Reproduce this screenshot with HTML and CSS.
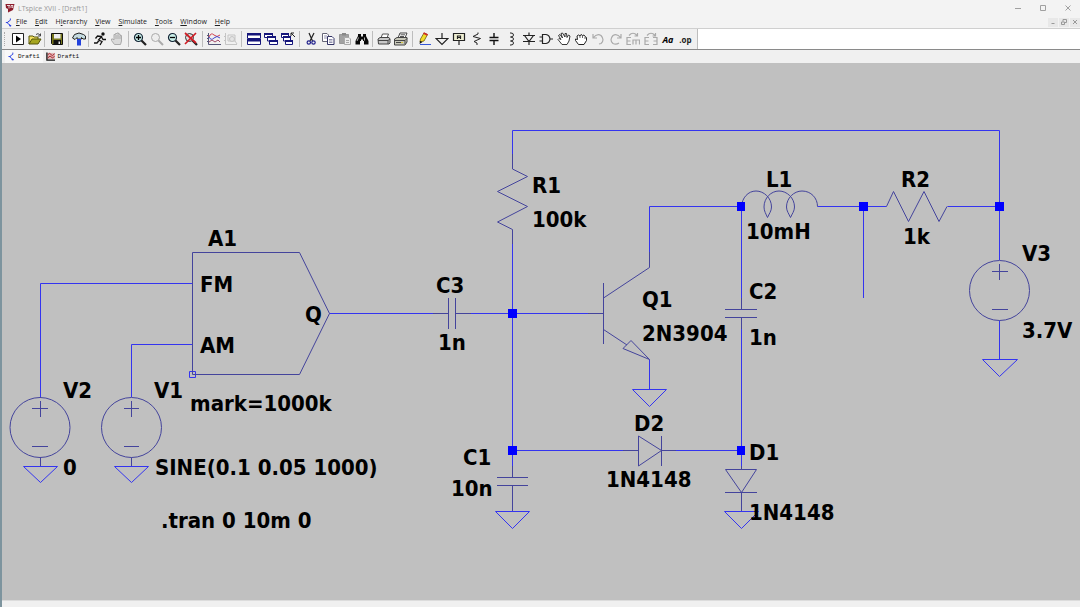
FILE: index.html
```html
<!DOCTYPE html>
<html lang="en">
<head>
<meta charset="utf-8">
<title>LTspice XVII - [Draft1]</title>
<link rel="stylesheet" href="styles.css">
</head>
<body>
<div class="window">
  <header class="titlebar">
    <svg class="app-icon" viewBox="0 0 10 10" aria-hidden="true"><path d="M.5 1H9.500L8 7L3 9.500V6L1 5Z" fill="#8c1c2c"/><path d="M2 2.500H5M4 2.500V5.500M6 5V2.500H8L7.500 5" fill="none" stroke="#fff" stroke-width=".8"/></svg>
    <h1 class="title">LTspice XVII - [Draft1]</h1>
    <div class="window-controls">
      <button class="win-btn" aria-label="Minimize"><svg viewBox="0 0 8 8"><path d="M1 4.500H7"/></svg></button>
      <button class="win-btn" aria-label="Maximize"><svg viewBox="0 0 8 8"><path d="M1.500 1.500H6.500V6.500H1.500Z"/></svg></button>
      <button class="win-btn" aria-label="Close"><svg viewBox="0 0 8 8"><path d="M1.500 1.500L6.500 6.500M6.500 1.500L1.500 6.500"/></svg></button>
    </div>
  </header>

  <nav class="menubar">
    <svg class="doc-icon" viewBox="0 0 8 10" aria-hidden="true"><path d="M5.500 .5V2.500L2.500 4.500V6L5.500 8V9.500M.5 5H2.500M4 8.500H6.500"/></svg>
    <button class="menu"><u>F</u>ile</button>
    <button class="menu"><u>E</u>dit</button>
    <button class="menu">H<u>i</u>erarchy</button>
    <button class="menu"><u>V</u>iew</button>
    <button class="menu"><u>S</u>imulate</button>
    <button class="menu"><u>T</u>ools</button>
    <button class="menu"><u>W</u>indow</button>
    <button class="menu"><u>H</u>elp</button>
    <div class="mdi-controls">
      <button class="mdi-btn" aria-label="Minimize document"><svg viewBox="0 0 8 8"><path d="M2.500 5.500H5.500"/></svg></button>
      <button class="mdi-btn" aria-label="Restore document"><svg viewBox="0 0 8 8"><path d="M1.500 4H4.500V6.500H1.500ZM3 3.500V1.500H6.500V4.500H5"/></svg></button>
      <button class="mdi-btn" aria-label="Close document"><svg viewBox="0 0 8 8"><path d="M2 2L6 6M6 2L2 6"/></svg></button>
    </div>
  </nav>

  <div class="toolrow">
  <div class="toolbar" role="toolbar" aria-label="Schematic tools">
    <span class="grip"></span>
    <div class="group g-file">
      <button class="tool" aria-label="New schematic"><svg viewBox="0 0 14 14"><path d="M1.500 1.500H12.500V12.500H1.500Z" fill="#fff" stroke="#222"/><path d="M5 3.500L10 7L5 10.500Z" fill="#000"/></svg></button>
      <button class="tool" aria-label="Open"><svg viewBox="0 0 14 14"><path d="M1 12V4H5L6 5H10V7" fill="#f2e060" stroke="#55550a"/><path d="M1 12L4 7H13L10 12Z" fill="#a5a520" stroke="#55550a"/><path d="M8 2.500Q10 .5 12 3M12.500 1.500V4H10" fill="none" stroke="#444"/></svg></button>
    </div>
    <div class="group g-save">
      <button class="tool" aria-label="Save"><svg viewBox="0 0 14 14"><path d="M1.500 1.500H12.500V12.500H2.500L1.500 11.500Z" fill="#77771c" stroke="#111"/><path d="M4 2H10.500V6.500H4Z" fill="#eee"/><path d="M3.500 8H11V12.500H3.500Z" fill="#111"/><path d="M8.500 9.500H10V12H8.500Z" fill="#eee"/></svg></button>
    </div>
    <div class="group g-panel">
      <button class="tool" aria-label="Control panel"><svg viewBox="0 0 14 14"><path d="M.5 6L2.500 2.500Q7 -.5 11.500 2.500L13.500 4V7H11L9.500 5.500V7H5V5.500L3 7.500Z" fill="#c5dbe0" stroke="#222"/><path d="M5 7H9V13.500H5Z" fill="#2342dd"/></svg></button>
    </div>
    <div class="group g-run">
      <button class="tool" aria-label="Run"><svg viewBox="0 0 14 14"><circle cx="10" cy="2" r="1.700" fill="#111"/><path d="M9 4L5.500 8L9 9.500L7 13M6 8.500L4 11H1M8 4.500L4.500 4L2.500 6.500M8.500 5L10 7.500H13" fill="none" stroke="#111" stroke-width="1.300"/></svg></button>
      <button class="tool" aria-label="Halt" disabled><svg viewBox="0 0 14 14"><path d="M4.500 12.500L1.500 8.500V7H3L4 8V2.500H5.500V1.500H7V1H8.500V2H10V3.500H11.500V9L10.500 12.500Z" fill="#dadada" stroke="#aaa"/><path d="M6 7V3M8 7V2.500M10 7V4" stroke="#999" stroke-width=".7"/></svg></button>
    </div>
    <div class="group g-zoom">
      <button class="tool" aria-label="Zoom in"><svg viewBox="0 0 14 14"><circle cx="5.500" cy="5.500" r="4" fill="#c9eee8" stroke="#123" stroke-width="1.200"/><path d="M8.500 8.500L13 13" stroke="#222" stroke-width="2.200"/><path d="M3 5.500H8M5.500 3V8" stroke="#000" stroke-width="1.300"/></svg></button>
      <button class="tool" aria-label="Zoom back" disabled><svg viewBox="0 0 14 14"><circle cx="5.500" cy="5.500" r="4" fill="#eee" stroke="#aaa"/><path d="M8.500 8.500L13 13" stroke="#aaa" stroke-width="2"/></svg></button>
      <button class="tool" aria-label="Zoom out"><svg viewBox="0 0 14 14"><circle cx="5.500" cy="5.500" r="4" fill="#c9eee8" stroke="#123" stroke-width="1.200"/><path d="M8.500 8.500L13 13" stroke="#222" stroke-width="2.200"/><path d="M3 5.500H8" stroke="#000" stroke-width="1.300"/></svg></button>
      <button class="tool" aria-label="Zoom full extents"><svg viewBox="0 0 14 14"><circle cx="5.500" cy="5.500" r="4" fill="#ddd" stroke="#333"/><path d="M8.500 8.500L13 13" stroke="#222" stroke-width="2.200"/><path d="M1 1L12 11M12 1L1 12" stroke="#d01c24" stroke-width="1.700"/></svg></button>
    </div>
    <div class="group g-plot">
      <button class="tool" aria-label="Autorange"><svg viewBox="0 0 14 14"><path d="M1.500 1V12.500H14M0 3.500H2M0 6.500H2M0 9.500H2" fill="none" stroke="#557"/><path d="M2 5Q4 0 7 3T13 3" fill="none" stroke="#d04050"/><path d="M2 5Q4 9 7 6T13 6" fill="none" stroke="#4048d0"/><path d="M2 10L5 8L8 10L11 8L13 10" fill="none" stroke="#a04868"/></svg></button>
      <button class="tool" aria-label="Plot settings" disabled><svg viewBox="0 0 14 14"><path d="M1.500 1V12.500H13M4 3H11V9H4ZM0 4.500H2M0 8.500H2M11 9L13 12" fill="none" stroke="#c4c4c4"/><circle cx="8" cy="7" r="2.500" fill="#e4e4e4" stroke="#c4c4c4"/></svg></button>
    </div>
    <div class="group g-windows">
      <button class="tool" aria-label="Tile windows"><svg viewBox="0 0 14 14"><path d="M.5 1.500H13.500V6.500H.5ZM.5 7.500H13.500V12.500H.5Z" fill="#fff" stroke="#15157a"/><path d="M0 1H14V3.500H0ZM0 7H14V9.500H0Z" fill="#15157a"/></svg></button>
      <button class="tool" aria-label="Cascade windows"><svg viewBox="0 0 14 14"><g fill="#fff" stroke="#15157a"><path d="M.5 1.500H8.500V5.500H.5ZM3.500 4.500H11.500V9H3.500ZM5.500 8.500H13.500V12.500H5.500Z"/></g><path d="M0 1H9V3H0ZM3 4H12V6H3ZM5 8H14V10H5Z" fill="#15157a"/></svg></button>
      <button class="tool" aria-label="Close all windows"><svg viewBox="0 0 14 14"><g fill="#fff" stroke="#15157a"><path d="M.5 1.500H7.500V5.500H.5ZM2.500 4.500H9.500V9H2.500ZM4.500 8.500H11.500V12.500H4.500Z"/></g><path d="M0 1H8V3H0ZM2 4H10V6H2ZM4 8H12V10H4Z" fill="#15157a"/><path d="M10 1H13M10 1V4M10 1L14 5" stroke="#222" fill="none"/></svg></button>
    </div>
    <div class="group g-edit">
      <button class="tool" aria-label="Cut"><svg viewBox="0 0 14 14"><path d="M5 1L8.500 9M10 1L6 9" stroke="#222" stroke-width="1.200"/><circle cx="4.800" cy="10.500" r="1.700" fill="none" stroke="#20208c" stroke-width="1.200"/><circle cx="9.500" cy="10.500" r="1.700" fill="none" stroke="#20208c" stroke-width="1.200"/></svg></button>
      <button class="tool" aria-label="Copy"><svg viewBox="0 0 14 14"><path d="M1.500 1.500H6L7.500 3V9.500H1.500Z" fill="#fff" stroke="#667"/><path d="M6.500 4.500H11L13 6.500V12.500H6.500Z" fill="#fff" stroke="#336"/><path d="M3 4H6M3 6H6M8 7.500H11.500M8 9H11.500M8 10.500H11.500" stroke="#779" stroke-width=".8"/></svg></button>
      <button class="tool" aria-label="Paste" disabled><svg viewBox="0 0 14 14"><path d="M1.500 2.500H10.500V11.500H1.500Z" fill="#a2a2a2" stroke="#999"/><path d="M4 1H8V3.500H4Z" fill="#888"/><path d="M6.500 5.500H11L12.500 7V12.500H6.500Z" fill="#eee" stroke="#aaa"/><path d="M8 8.500H11M8 10.500H11" stroke="#aaa"/></svg></button>
      <button class="tool" aria-label="Find"><svg viewBox="0 0 14 14"><path d="M3 2H6V4L7 5L8 4V2H11V4L13.500 9V12.500H9V9H8V7.500H6V9H5V12.500H.5V9L3 4Z" fill="#080808"/><path d="M3.500 5.500L2 9M9.500 5.500V8.500" stroke="#ddd" stroke-width=".8"/></svg></button>
    </div>
    <div class="group g-print">
      <button class="tool" aria-label="Print preview"><svg viewBox="0 0 14 14"><path d="M4 6L5.500 2H11.500L10 6" fill="#fff" stroke="#555"/><path d="M1 7L3 5.500H12L13 7V11L12 12H1.500Z" fill="#c8c8c8" stroke="#444"/><path d="M1 8.500H11L13 7M11 8.500V12" fill="none" stroke="#444"/></svg></button>
      <button class="tool" aria-label="Print"><svg viewBox="0 0 14 14"><path d="M4 6L6 1H13L11 6" fill="#fff" stroke="#444"/><path d="M6.500 2.800H11M6 4.500H10" stroke="#555"/><path d="M.5 7L3 5.500H13V10L11 13H.5Z" fill="#c8c8ba" stroke="#444"/><path d="M.5 8.500H11L13 6.500M11 8.500V12M2 10.500H9" fill="none" stroke="#444"/><path d="M7 10H9V11H7Z" fill="#d5c640"/></svg></button>
    </div>
    <div class="group g-draw">
      <button class="tool" aria-label="Wire"><svg viewBox="0 0 14 14"><path d="M2 10L2.500 7L6 1L9.500 2.500L6 9Z" fill="#f2dc28" stroke="#6b5a10" stroke-width=".8"/><path d="M5.500 1L9.500 3" stroke="#d02828" stroke-width="1.800"/><path d="M1.500 12L2 9L4.500 10Z" fill="#111"/><path d="M2 12.500H13" stroke="#3457d8"/></svg></button>
      <button class="tool" aria-label="Ground"><svg viewBox="0 0 14 14"><path d="M7 1V6.500M1 6.500H13L7 12.500Z" fill="none" stroke="#222" stroke-width="1.200"/></svg></button>
      <button class="tool" aria-label="Label net"><svg viewBox="0 0 14 14"><path d="M1.500 1.500H12.500V8.500H1.500Z" fill="#eeeed2" stroke="#222" stroke-width="1.200"/><path d="M7 8.500V13M5.500 7V4H8.500V7M5.500 5.500H8.500" fill="none" stroke="#222" stroke-width="1.200"/></svg></button>
      <button class="tool" aria-label="Resistor"><svg viewBox="0 0 14 14"><path d="M8 .5V2L3 4.500L10.500 6.500L4 9.500L7 11V13" fill="none" stroke="#222"/></svg></button>
      <button class="tool" aria-label="Capacitor"><svg viewBox="0 0 14 14"><path d="M7 1V5.500M7 8.500V13M2.500 5.500H11.500M2.500 8.500H11.500" stroke="#111" stroke-width="1.400"/></svg></button>
      <button class="tool" aria-label="Inductor"><svg viewBox="0 0 14 14"><path d="M5 1H6Q8.500 1 8.500 3T5.500 5Q8.500 5 8.500 7T5.500 9Q8.500 9 8.500 11T6 13H5" fill="none" stroke="#222"/></svg></button>
      <button class="tool" aria-label="Diode"><svg viewBox="0 0 14 14"><path d="M7 .5V4M7 9.500V13M1 3.500H13M2.500 3.500L7 9.500L11.500 3.500M1 9.500H13" fill="none" stroke="#222" stroke-width="1.200"/></svg></button>
      <button class="tool" aria-label="Component"><svg viewBox="0 0 14 14"><path d="M3.500 2.500H7Q10.500 3 11 7Q10.500 11 7 11.500H3.500ZM.5 5H3.500M.5 9H3.500M11 7H14" fill="none" stroke="#222" stroke-width="1.200"/></svg></button>
      <button class="tool" aria-label="Move"><svg viewBox="0 0 14 14"><path d="M5 12.500L1 7.500L2 6.500L4 7.500L1.500 3.500L3 2.500L5.500 6L4 1.500L5.500 1L8 5V1.500H9.500L10 5.500L11.500 3L13 4L12 9L10 12.500Z" fill="#fff" stroke="#222" stroke-width=".9"/></svg></button>
      <button class="tool" aria-label="Drag"><svg viewBox="0 0 14 14"><path d="M4.500 12.500L1.500 8.500V7L3.500 7.500L3 4L4.500 3L6 4L7 2.500L8.500 3.500L10 3L11 4.500L12.500 5.500V8.500L10 12.500Z" fill="#fff" stroke="#222"/><path d="M6 4V6M8.500 4V6M11 5V7" stroke="#222" stroke-width=".7"/></svg></button>
      <button class="tool" aria-label="Undo" disabled><svg viewBox="0 0 14 14"><path d="M2 2V6H6M2 6Q6 1 10 3.500Q14 8 10 11.500L8 12" fill="none" stroke="#aaa" stroke-width="1.200"/></svg></button>
      <button class="tool" aria-label="Redo" disabled><svg viewBox="0 0 14 14"><path d="M12 2V6H8M12 6Q8 1 4 3.500Q0 8 4 11.500Q7 13 10 11" fill="none" stroke="#aaa" stroke-width="1.200"/></svg></button>
      <button class="tool" aria-label="Rotate" disabled><svg viewBox="0 0 14 14"><path d="M5 5.500H1V12.500H5M1 9H4.500M7 12.500V8H13.500V12.500M10 8V12.500M3 3.500Q7 -1 11 3.500M11.500 1V4H8.500" fill="none" stroke="#aaa" stroke-width="1.200"/></svg></button>
      <button class="tool" aria-label="Mirror" disabled><svg viewBox="0 0 14 14"><path d="M5 5.500H1V12.500H5M1 9H4.500M9 5.500H13V12.500H9M13 9H9.500M3 3.500Q7 -1 11 3.500M11.500 1V4H8.500" fill="none" stroke="#aaa" stroke-width="1.200"/></svg></button>
      <button class="tool tool-text" aria-label="Text">Aa</button>
      <button class="tool tool-op" aria-label="SPICE directive">.op</button>
    </div>
  </div>
  </div>

  <div class="tabs" role="tablist">
    <button class="tab active" role="tab" aria-selected="true">
      <svg class="tab-icon" viewBox="0 0 8 10"><path class="doc-mark" d="M5.500 .5V2.500L2.500 4.500V6L5.500 8V9.500M.5 5H2.500M4 8.500H6.500"/></svg>
      <span>Draft1</span>
    </button>
    <button class="tab" role="tab" aria-selected="false">
      <svg class="tab-icon wide" viewBox="0 0 10 10"><path d="M1 1H10V8H1Z" fill="#dcb4b4"/><path d="M1 .5V9H10" fill="none" stroke="#111" stroke-width="1.400"/><path d="M2 3L4 1.500L7 4L9.500 2M2 6.500L4.500 4.500L7 6.500L9.500 5" fill="none" stroke="#a81822"/></svg>
      <span>Draft1</span>
    </button>
  </div>

  <main class="canvas">
    <svg class="schematic" viewBox="2 63 1078 537" preserveAspectRatio="xMinYMin meet" role="img" aria-label="FM transmitter schematic">
      <g class="wire">
        <path d="M192.500 283.500H40.500V397M192.500 344.500H131.500V397"/>
        <path d="M329.500 313.500H433M471 313.500H588"/>
        <path d="M512.500 154V130.500H999.500V260M512.500 244V466"/>
        <path d="M649.500 252V206.500H741.500V298M741.500 329V466M817.500 206.500H886.500M863.500 206.500V298M947.500 206.500H999.500"/>
        <path d="M512.500 450.500H623M676 450.500H741.500M649.500 359.500V389.500M999.500 320.500V359.500"/>
        <path d="M23.500 466.500H57.500L40.500 482.500ZM114.500 466.500H148.500L131.500 482.500ZM495.500 511.500H529.500L512.500 528.500ZM632.500 389.500H666.500L649.500 406.500ZM724.500 511.500H758.500L741.500 528.500ZM982.500 359.500H1017.500L999.500 376.500Z"/>
        <path d="M189.500 371.500H195.500V377.500H189.500Z"/>
      </g>
      <g class="symbol">
        <path d="M192.500 252.500H299.500L329.500 313.500L299.500 374.500H192.500Z"/>
        <circle cx="40" cy="427.500" r="30"/><path d="M32 408.500H48M40.500 401V417M32 446.500H48M40.500 457.500V466"/>
        <circle cx="131.500" cy="427.500" r="30"/><path d="M124 408.500H139M131.500 401V417M124 446.500H139M131.500 457.500V466"/>
        <circle cx="999.500" cy="290.500" r="30"/><path d="M992 271.500H1008M999.500 264V280M992 309.500H1008"/>
        <path d="M433 313.500H448M448.500 298V329M455.500 298V329M455.500 313.500H471"/>
        <path d="M512.500 154V169L527.500 176.500L497.500 191.500L527.500 206.500L497.500 222L512.500 229.500V244"/>
        <path d="M512.500 466V477.500M497 477.500H528M497 485.500H528M512.500 485.500V511"/>
        <path d="M588 313.500H603.500M603.500 283V344M603.500 298L649.500 267.500V252M603.500 329.500L627 345M623 348.500L631 340.500L649.500 359.500Z"/>
        <path d="M741.500 206.500C742 198 748 191 756 191C764 191 771.500 198 771.500 207C771.500 211 769 214 767.500 217.500C766 214 764 211 764 207C764 198 771 191 779 191C787 191 794.500 198 794.500 207C794.500 211 792 214 790.500 217.500C789 214 786.500 211 786.500 207C786.500 198 794 191 802 191C811 191 817.500 198 817.500 206.500"/>
        <path d="M886.500 206.500L893.500 191.500L908.500 221.500L924 191.500L939 221.500L947 206.500"/>
        <path d="M741.500 298V309.500M725 309.500H757M725 317.500H757M741.500 317.500V329"/>
        <path d="M623 450.500H638.500M638.500 436V466L661.500 450.500ZM661.500 436V466M661.500 450.500H676"/>
        <path d="M741.500 466V469.500M725.500 469.500H756.500L741.500 492.500ZM725 492.500H757M741.500 492.500V511"/>
      </g>
      <g class="node">
        <rect x="508" y="309" width="9" height="9"/><rect x="508" y="446" width="9" height="9"/>
        <rect x="737" y="202" width="8" height="9"/><rect x="737" y="446" width="8" height="9"/>
        <rect x="859" y="202" width="9" height="9"/><rect x="995" y="202" width="9" height="9"/>
      </g>
      <g class="label">
        <text x="208" y="246">A1</text><text x="200" y="292">FM</text><text x="200" y="353">AM</text><text x="305" y="322">Q</text>
        <text x="63" y="398">V2</text><text x="63" y="475">0</text><text x="154" y="398">V1</text>
        <text x="190" y="411">mark=1000k</text><text x="155" y="475">SINE(0.1 0.05 1000)</text><text x="161" y="528">.tran 0 10m 0</text>
        <text x="532" y="193">R1</text><text x="532" y="227">100k</text><text x="436" y="293">C3</text><text x="438" y="350">1n</text>
        <text x="642" y="307">Q1</text><text x="642" y="341">2N3904</text>
        <text x="766" y="187">L1</text><text x="746" y="239">10mH</text><text x="901" y="187">R2</text><text x="903" y="244">1k</text>
        <text x="1022" y="261">V3</text><text x="1022" y="338">3.7V</text><text x="749" y="299">C2</text><text x="749" y="345">1n</text>
        <text x="463" y="465">C1</text><text x="451" y="496">10n</text><text x="634" y="431">D2</text><text x="606" y="487">1N4148</text>
        <text x="749" y="460">D1</text><text x="749" y="520">1N4148</text>
      </g>
    </svg>
  </main>
  <footer class="statusbar"></footer>
</div>
</body>
</html>
```

FILE: styles.css
```css
* { box-sizing: border-box; }

body {
  margin: 0;
  font-family: "Open Sans", "Noto Sans", sans-serif;
  font-size: 7px;
  color: #222;
}

button {
  margin: 0;
  padding: 0;
  border: 0;
  background: none;
  font: inherit;
  color: inherit;
}

.window {
  display: flex;
  flex-direction: column;
  height: 100vh;
  border-left: 2px solid #7d949e;
  background: #f0f0f0;
}

.titlebar {
  display: flex;
  align-items: center;
  flex: 0 0 16px;
  padding-left: 3px;
  background: #f3f3f3;
}

.app-icon { width: 10px; height: 10px; }

.title {
  margin: 0 0 0 3px;
  font-size: 7px;
  font-weight: 400;
  color: #999;
}

.window-controls, .mdi-controls { display: flex; margin-left: auto; }
.window-controls { gap: 12px; padding-right: 6px; }
.win-btn { display: grid; place-items: center; width: 13px; height: 14px; }
.win-btn svg { width: 8px; height: 8px; fill: none; stroke: #a0a0a0; }

.menubar {
  display: flex;
  align-items: center;
  flex: 0 0 13px;
  gap: 8px;
  padding-left: 3px;
  background: #f3f3f3;
  border-bottom: 1px solid #cfcfcf;
}

.doc-icon { width: 8px; height: 9px; margin-right: -5px; fill: none; stroke: #2038e0; }
.menu { line-height: 12px; white-space: nowrap; }
.menu u { text-underline-offset: 1px; }
.mdi-controls { gap: 1px; }
.mdi-btn { display: grid; place-items: center; width: 10px; height: 9px; background: #e8e8e8; }
.mdi-btn svg { width: 8px; height: 8px; fill: none; stroke: #999; }

.toolrow {
  flex: 0 0 21px;
  background: #fff;
  border-bottom: 1px solid #8a8a8a;
}

.toolbar {
  display: flex;
  width: max-content;
  height: 20px;
  background: #f0f0f0;
  border-right: 1px solid #bdbdbd;
}

.grip { width: 2px; margin: 3px 2px; border-left: 1px dotted #aaa; }
.group {
  display: flex;
  align-items: center;
  justify-content: center;
  margin: 2px 0;
  border-right: 1px solid #bdbdbd;
}
.g-file { width: 37px; }
.g-save { width: 24px; }
.g-panel { width: 20px; }
.g-run { width: 40px; }
.g-zoom { width: 74px; }
.g-plot { width: 39px; }
.g-windows { width: 58px; }
.g-edit { width: 73px; }
.g-print { width: 40px; }
.g-draw { width: 284px; padding: 0 3px; justify-content: space-around; border-right: 0; }

.tool { display: grid; place-items: center; width: 17px; height: 16px; }
.tool svg { width: 14px; height: 14px; }
.tool-text { font: italic 700 9px "Open Sans", sans-serif; color: #000; }
.tool-op { font: 700 8px "Open Sans", sans-serif; color: #222; }

.tabs { display: flex; flex: 0 0 13px; padding-left: 3px; background: #f0f0f0; }
.tab {
  display: flex;
  align-items: center;
  gap: 3px;
  padding: 0 3px;
  font: 6px "Liberation Mono", monospace;
  color: #111;
}
.tab.active { background: #f8f8f8; }
.tab-icon { width: 7px; height: 9px; }
.tab-icon.wide { width: 9px; }
.doc-mark { fill: none; stroke: #2038e0; }

.canvas { flex: 1 1 0; min-height: 0; background: #c0c0c0; overflow: hidden; }
.schematic { display: block; width: 100%; height: 100%; }
.wire { fill: none; stroke: #3434f0; }
.symbol { fill: none; stroke: #44449c; }
.node { fill: #0000ff; }
.label {
  font-family: "DejaVu Sans Condensed", "DejaVu Sans", sans-serif;
  font-size: 22px;
  font-weight: 700;
  fill: #000;
}

.statusbar { flex: 0 0 7px; background: #f0f0f0; border-top: 1px solid #dcdcdc; }
```
